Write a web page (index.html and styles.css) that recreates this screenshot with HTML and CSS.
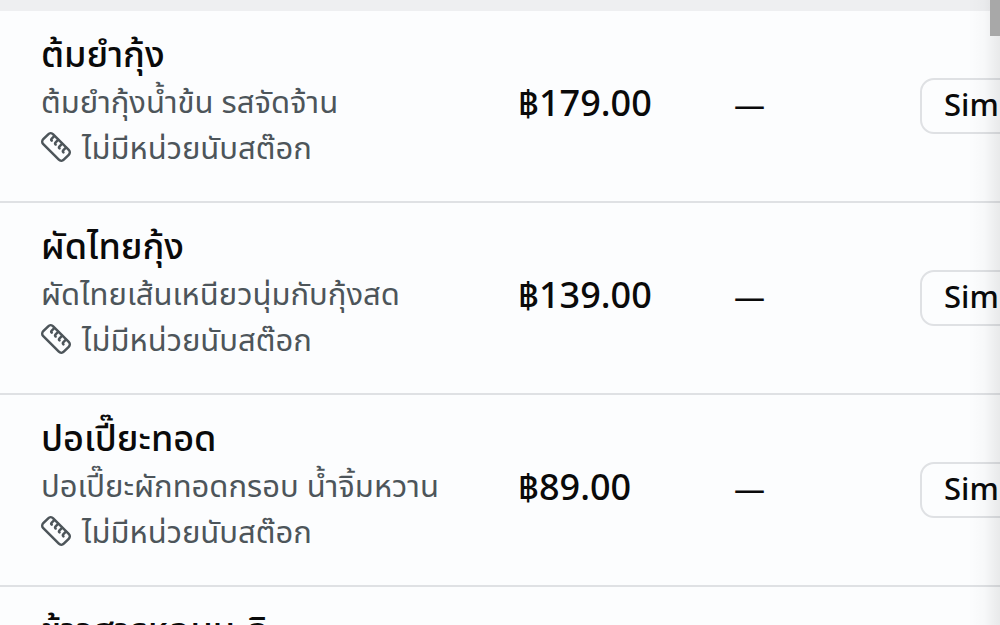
FILE: index.html
```
<!DOCTYPE html>
<html lang="th">
<head>
<meta charset="utf-8">
<title>รายการสินค้า</title>
<link rel="stylesheet" href="styles.css">
</head>
<body>
<svg class="sprite" aria-hidden="true">
  <symbol id="ruler" viewBox="-1 -1 30 30">
    <g transform="rotate(45 14 14)" fill="none" stroke="currentColor" stroke-width="2.5" stroke-linecap="round" stroke-linejoin="round">
      <rect x="-0.500" y="7" width="29" height="14" rx="3.5"/>
      <path d="M5 7.500v3.500q0 1.500 1.500 1.500M10.500 7.500v3.500q0 1.500 1.500 1.500M16 7.500v3.500q0 1.500 1.500 1.500M21.500 7.500v3.500q0 1.500 1.500 1.500"/>
    </g>
  </symbol>
</svg>
<main class="page">
  <div class="head-strip"></div>
  <table class="products">
    <colgroup><col class="col-name"><col class="col-price"><col class="col-cost"><col class="col-type"></colgroup>
    <tbody>
      <tr>
        <td><div class="name">ต้มยำกุ้ง</div><div class="detail">ต้มยำกุ้งน้ำข้น รสจัดจ้าน</div><div class="detail unit"><svg class="icon"><use href="#ruler"/></svg>ไม่มีหน่วยนับสต๊อก</div></td>
        <td class="price">฿179.00</td><td class="dash">—</td><td><button class="tag" type="button">Simple</button></td>
      </tr>
      <tr>
        <td><div class="name">ผัดไทยกุ้ง</div><div class="detail">ผัดไทยเส้นเหนียวนุ่มกับกุ้งสด</div><div class="detail unit"><svg class="icon"><use href="#ruler"/></svg>ไม่มีหน่วยนับสต๊อก</div></td>
        <td class="price">฿139.00</td><td class="dash">—</td><td><button class="tag" type="button">Simple</button></td>
      </tr>
      <tr>
        <td><div class="name">ปอเปี๊ยะทอด</div><div class="detail">ปอเปี๊ยะผักทอดกรอบ น้ำจิ้มหวาน</div><div class="detail unit"><svg class="icon"><use href="#ruler"/></svg>ไม่มีหน่วยนับสต๊อก</div></td>
        <td class="price">฿89.00</td><td class="dash">—</td><td><button class="tag" type="button">Simple</button></td>
      </tr>
      <tr>
        <td><div class="name">ข้าวสารหอมมะลิ</div></td><td></td><td></td><td></td>
      </tr>
    </tbody>
  </table>
  <div class="edge-shadow"></div>
  <div class="scroll-thumb"></div>
</main>
</body>
</html>
```
FILE: styles.css
```
* { box-sizing: border-box; }
body {
  margin: 0;
  height: 100vh;
  overflow: hidden;
  background: #fcfdfe;
  color: #0a0a0a;
  font-family: "Noto Sans", "Noto Sans Thai", sans-serif;
}
.sprite { position: absolute; width: 0; height: 0; }
.page {
  position: relative;
  height: 100%;
  overflow: hidden;
}
.head-strip { height: 11px; background: #eeeff1; }
.products {
  width: 112%;
  table-layout: fixed;
  border-spacing: 0;
}
.col-name { width: 518px; }
.col-price { width: 216px; }
.col-cost { width: 186px; }
.products td {
  padding: 0;
  border-bottom: 2px solid #dfe1e4;
  vertical-align: middle;
  white-space: nowrap;
}
.products td:first-child { padding: 19px 0 31px 41px; }
.name { font-size: 36px; font-weight: 500; line-height: 48px; }
.detail { color: #4d555a; font-size: 31px; line-height: 46px; }
.unit { display: flex; align-items: center; gap: 11px; }
.icon { width: 30px; height: 30px; }
.products .price { padding-bottom: 2px; font-size: 36px; font-weight: 500; }
.products .dash { padding-bottom: 4px; font-size: 31px; }
.tag {
  display: block;
  height: 56px;
  padding: 0 22px 4px;
  border: 2px solid #dfe1e4;
  border-radius: 14px;
  background: transparent;
  color: inherit;
  font: 500 31px "Noto Sans", sans-serif;
}
.edge-shadow {
  position: absolute;
  inset: 0 0 0 auto;
  width: 32px;
  background: linear-gradient(to right, transparent, rgba(0, 0, 0, 0.02) 50%, rgba(0, 0, 0, 0.08));
}
.scroll-thumb {
  position: absolute;
  top: 0;
  right: 0;
  width: 10px;
  height: 36px;
  background: #a8a8a8;
}
```
